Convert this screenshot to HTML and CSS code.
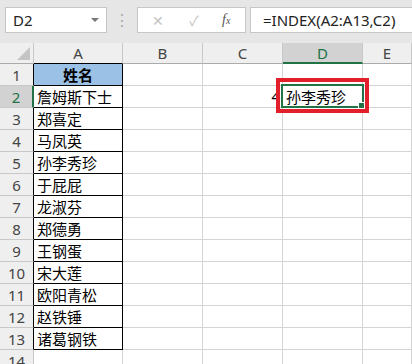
FILE: index.html
```html
<!DOCTYPE html>
<html lang="zh">
<head>
    <meta charset="UTF-8">
    <title>INDEX</title>
    <link rel="stylesheet" href="styles.css">
</head>
<body>
    <div class="bar">
        <div class="namebox">
            <span>D2</span>
            <span class="arrow"></span>
        </div>
        <div class="dots">⋮</div>
        <div class="cmds">
            <span class="x">✕</span>
            <span class="ok">✓</span>
            <span class="fx">f<small>x</small></span>
        </div>
        <div class="formula">=INDEX(A2:A13,C2)</div>
    </div>

    <div class="sheet">
        <div class="ch corner"><span class="tri"></span></div>
        <div class="ch topA">A</div>
        <div class="ch">B</div>
        <div class="ch">C</div>
        <div class="ch sel">D</div>
        <div class="ch">E</div>

        <div class="rh bk">1</div>
        <div class="c b head">姓名</div>
        <div class="c"></div><div class="c"></div><div class="c"></div><div class="c"></div>

        <div class="rh bk rsel">2</div>
        <div class="c b">詹姆斯下士</div>
        <div class="c"></div>
        <div class="c num">4</div>
        <div class="c active">孙李秀珍<span class="handle"></span><span class="mark"></span></div>
        <div class="c"></div>

        <div class="rh bk">3</div>
        <div class="c b">郑喜定</div>
        <div class="c"></div><div class="c"></div><div class="c"></div><div class="c"></div>

        <div class="rh bk">4</div>
        <div class="c b">马凤英</div>
        <div class="c"></div><div class="c"></div><div class="c"></div><div class="c"></div>

        <div class="rh bk">5</div>
        <div class="c b">孙李秀珍</div>
        <div class="c"></div><div class="c"></div><div class="c"></div><div class="c"></div>

        <div class="rh bk">6</div>
        <div class="c b">于屁屁</div>
        <div class="c"></div><div class="c"></div><div class="c"></div><div class="c"></div>

        <div class="rh bk">7</div>
        <div class="c b">龙淑芬</div>
        <div class="c"></div><div class="c"></div><div class="c"></div><div class="c"></div>

        <div class="rh bk">8</div>
        <div class="c b">郑德勇</div>
        <div class="c"></div><div class="c"></div><div class="c"></div><div class="c"></div>

        <div class="rh bk">9</div>
        <div class="c b">王钢蛋</div>
        <div class="c"></div><div class="c"></div><div class="c"></div><div class="c"></div>

        <div class="rh bk">10</div>
        <div class="c b">宋大莲</div>
        <div class="c"></div><div class="c"></div><div class="c"></div><div class="c"></div>

        <div class="rh bk">11</div>
        <div class="c b">欧阳青松</div>
        <div class="c"></div><div class="c"></div><div class="c"></div><div class="c"></div>

        <div class="rh bk">12</div>
        <div class="c b">赵铁锤</div>
        <div class="c"></div><div class="c"></div><div class="c"></div><div class="c"></div>

        <div class="rh bk">13</div>
        <div class="c b">诸葛钢铁</div>
        <div class="c"></div><div class="c"></div><div class="c"></div><div class="c"></div>

        <div class="rh">14</div>
        <div class="c"></div>
        <div class="c"></div><div class="c"></div><div class="c"></div><div class="c"></div>
    </div>
</body>
</html>
```

FILE: styles.css
```css
body {
    margin: 0;
    width: 412px;
    height: 364px;
    overflow: hidden;
    background: #fff;
    font-family: "Noto Sans", "Noto Sans CJK SC", sans-serif;
}
.bar {
    height: 43px;
    background: #e6e6e6;
    display: flex;
    align-items: flex-start;
    padding-top: 7px;
    box-sizing: border-box;
}
.namebox {
    margin-left: 5px;
    width: 102px;
    height: 26px;
    box-sizing: border-box;
    background: #fff;
    border: 1px solid #c6c6c6;
    display: flex;
    align-items: center;
    justify-content: space-between;
    padding: 0 7px 0 7px;
    font-size: 15px;
    color: #222;
}
.arrow {
    width: 0;
    height: 0;
    border-left: 4px solid transparent;
    border-right: 4px solid transparent;
    border-top: 4px solid #777;
}
.dots {
    width: 30px;
    text-align: center;
    color: #aaa;
    font-size: 16px;
    line-height: 26px;
}
.cmds {
    width: 109px;
    height: 26px;
    box-sizing: border-box;
    background: #fff;
    border: 1px solid #c6c6c6;
    display: flex;
    align-items: center;
    padding-left: 12px;
    gap: 20px;
}
.x, .ok {
    color: #c4c4c4;
    font-size: 14px;
    width: 16px;
    text-align: center;
}
.fx {
    font-family: "Liberation Serif", serif;
    font-style: italic;
    color: #555;
    font-size: 14px;
}
.fx small {
    font-size: 10px;
}
.formula {
    margin-left: 4px;
    flex: 1;
    height: 26px;
    box-sizing: border-box;
    background: #fff;
    border: 1px solid #c6c6c6;
    border-right: none;
    padding-left: 12px;
    font-size: 15px;
    line-height: 24px;
    color: #222;
    white-space: nowrap;
}
.sheet {
    display: grid;
    grid-template-columns: 34px 89px 80px 80px 80px 1fr;
    grid-template-rows: 21px;
    grid-auto-rows: 22px;
}
.sheet > div {
    box-sizing: border-box;
    border-right: 1px solid #d4d4d4;
    border-bottom: 1px solid #d4d4d4;
}
.ch {
    background: #efefef;
    color: #444;
    font-size: 15px;
    text-align: center;
    line-height: 20px;
    border-right-color: #c8c8c8 !important;
    border-bottom-color: #ababab !important;
}
.corner {
    position: relative;
}
.tri {
    position: absolute;
    right: 3px;
    bottom: 3px;
    width: 0;
    height: 0;
    border-left: 13px solid transparent;
    border-bottom: 13px solid #c4c4c4;
}
.ch.sel {
    background: #d2d2d2;
    color: #217346;
    border-bottom: 2px solid #217346 !important;
}
.ch.topA {
    border-bottom-color: #000 !important;
}
.rh {
    background: #efefef;
    color: #444;
    font-size: 15px;
    text-align: center;
    line-height: 22px;
    border-right-color: #c8c8c8 !important;
    border-bottom-color: #c8c8c8 !important;
}
.rh.bk {
    border-right-color: #000 !important;
}
.rh.rsel {
    background: #d2d2d2;
    color: #217346;
    border-right: 2px solid #217346 !important;
}
.c {
    font-family: "Noto Sans CJK SC", sans-serif;
    font-size: 15px;
    line-height: 21px;
    padding-left: 3px;
    color: #000;
    white-space: nowrap;
}
.c.b {
    border-right-color: #000;
    border-bottom-color: #000;
}
.c.head {
    background: #9bc2e6;
    font-weight: bold;
    text-align: center;
    padding-left: 0;
}
.c.num {
    font-family: "Noto Sans", sans-serif;
    text-align: right;
    padding-right: 2px;
}
.c.active {
    position: relative;
    padding-left: 3px;
}
.c.active::before {
    content: "";
    position: absolute;
    left: -2px;
    top: -2px;
    right: -2px;
    bottom: -1px;
    border: 2px solid #217346;
}
.handle {
    position: absolute;
    right: -3px;
    bottom: -2px;
    width: 5px;
    height: 5px;
    background: #217346;
    border: 1px solid #fff;
}
.mark {
    position: absolute;
    left: -7px;
    top: -8px;
    right: -7px;
    bottom: -6px;
    border: 4px solid #e2202b;
}
```
